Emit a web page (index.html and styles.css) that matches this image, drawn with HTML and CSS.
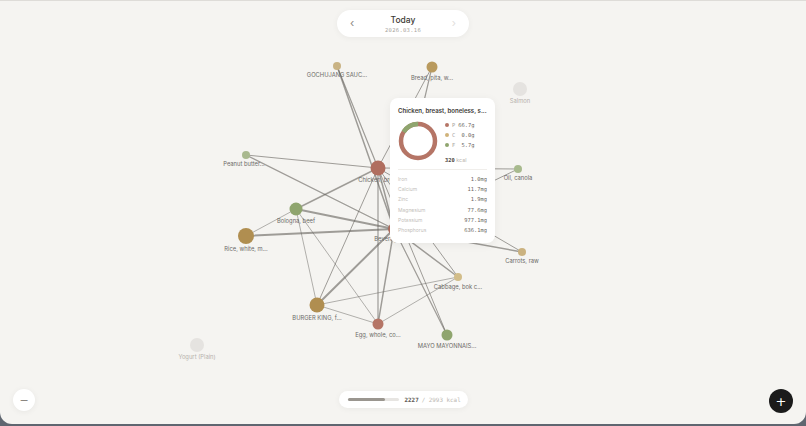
FILE: index.html
```html
<!DOCTYPE html>
<html lang="en">
  <head>
    <meta charset="UTF-8" />
    <meta name="viewport" content="width=device-width, initial-scale=1.0" />
    <title>Food Graph</title>
    <link rel="stylesheet" href="styles.css">
  </head>
  <body>
    <div class="app">
      <!-- Graph canvas: nodes sit at their own coordinates -->
      <svg class="graph" width="806" height="424" viewBox="0 0 806 424">
        <g class="edges">
          <line x1="337" y1="66" x2="378" y2="168" stroke-width="1.2" />
          <line x1="337" y1="66" x2="394" y2="229" stroke-width="1.5" />
          <line x1="432" y1="67" x2="378" y2="168" stroke-width="1" />
          <line x1="432" y1="67" x2="394" y2="229" stroke-width="1.2" />
          <line x1="246" y1="155" x2="378" y2="168" stroke-width="1" />
          <line x1="246" y1="155" x2="394" y2="229" stroke-width="1.3" />
          <line x1="296" y1="209" x2="378" y2="168" stroke-width="1.5" />
          <line x1="296" y1="209" x2="394" y2="229" stroke-width="1.8" />
          <line x1="296" y1="209" x2="317" y2="305" stroke-width="0.8" />
          <line x1="296" y1="209" x2="378" y2="324" stroke-width="0.8" />
          <line x1="296" y1="209" x2="246" y2="236" stroke-width="0.8" />
          <line x1="246" y1="236" x2="394" y2="229" stroke-width="2" />
          <line x1="378" y1="168" x2="394" y2="229" stroke-width="1.5" />
          <line x1="378" y1="168" x2="518" y2="169" stroke-width="1" />
          <line x1="394" y1="229" x2="518" y2="169" stroke-width="1" />
          <line x1="378" y1="168" x2="522" y2="252" stroke-width="1" />
          <line x1="394" y1="229" x2="522" y2="252" stroke-width="1.5" />
          <line x1="378" y1="168" x2="458" y2="277" stroke-width="1" />
          <line x1="394" y1="229" x2="458" y2="277" stroke-width="1.5" />
          <line x1="317" y1="305" x2="378" y2="168" stroke-width="1" />
          <line x1="317" y1="305" x2="394" y2="229" stroke-width="2" />
          <line x1="317" y1="305" x2="458" y2="277" stroke-width="0.8" />
          <line x1="317" y1="305" x2="378" y2="324" stroke-width="0.8" />
          <line x1="378" y1="324" x2="378" y2="168" stroke-width="1.2" />
          <line x1="378" y1="324" x2="394" y2="229" stroke-width="1.5" />
          <line x1="378" y1="324" x2="458" y2="277" stroke-width="0.8" />
          <line x1="447" y1="335" x2="378" y2="168" stroke-width="1" />
          <line x1="447" y1="335" x2="394" y2="229" stroke-width="1.2" />
        </g>
        <g class="nodes">
          <circle cx="337" cy="66" r="4" fill="#c9b384" />
          <circle cx="432" cy="67" r="5.5" fill="#b99a5e" />
          <circle cx="520" cy="89" r="7" class="faded" />
          <circle cx="246" cy="155" r="4" fill="#a9b98f" />
          <circle cx="378" cy="168" r="7.5" fill="#b06e5f" />
          <circle cx="518" cy="169" r="4" fill="#a8ba8e" />
          <circle cx="296" cy="209" r="6.5" fill="#8fa56e" />
          <circle cx="246" cy="236" r="8" fill="#b08e50" />
          <circle cx="394" cy="229" r="6" fill="#b06e5f" />
          <circle cx="522" cy="252" r="4" fill="#cbb27f" />
          <circle cx="458" cy="277" r="4" fill="#d2bd89" />
          <circle cx="317" cy="305" r="7.5" fill="#b08e50" />
          <circle cx="378" cy="324" r="5.5" fill="#b57566" />
          <circle cx="447" cy="335" r="5.5" fill="#8fa56e" />
          <circle cx="197" cy="345" r="7" class="faded" />
        </g>
        <g class="labels">
          <text x="337" y="76.5">GOCHUJANG SAUC...</text>
          <text x="432" y="79.5">Bread, pita, w...</text>
          <text x="520" y="102.5" class="muted">Salmon</text>
          <text x="244" y="165.5">Peanut butter...</text>
          <text x="378" y="181.5">Chicken, bre...</text>
          <text x="518" y="179.5">Oil, canola</text>
          <text x="296" y="222.5">Bologna, beef</text>
          <text x="246" y="250.5">Rice, white, m...</text>
          <text x="393" y="240.5">Beverages, ...</text>
          <text x="522" y="262.5">Carrots, raw</text>
          <text x="458" y="288.5">Cabbage, bok c...</text>
          <text x="317" y="319.5">BURGER KING, f...</text>
          <text x="378" y="336.5">Egg, whole, co...</text>
          <text x="447" y="347.5">MAYO MAYONNAIS...</text>
          <text x="197" y="358.5" class="muted">Yogurt (Plain)</text>
        </g>
      </svg>

      <header class="day-nav">
        <span class="arrow">&#8249;</span>
        <div class="day-title">
          <div class="day-name">Today</div>
          <div class="day-date">2026.03.16</div>
        </div>
        <span class="arrow arrow-off">&#8250;</span>
      </header>

      <!-- Hovered node details -->
      <div class="tooltip">
        <div class="tip-title">Chicken, breast, boneless, s...</div>
        <div class="tip-macros">
          <svg class="donut" width="40" height="40" viewBox="0 0 40 40">
            <circle cx="20" cy="20" r="17" fill="none" stroke="#b57566" stroke-width="4.5" />
            <circle cx="20" cy="20" r="17" fill="none" stroke="#8fa56e" stroke-width="4.5"
              stroke-dasharray="17.2 89.6" transform="rotate(-148 20 20)" />
          </svg>
          <div class="macro-side">
            <div class="macro"><i class="dot dot-p"></i><span class="m-key">P</span><span class="m-val">66.7g</span></div>
            <div class="macro"><i class="dot dot-c"></i><span class="m-key">C</span><span class="m-val">&nbsp;0.0g</span></div>
            <div class="macro"><i class="dot dot-f"></i><span class="m-key">F</span><span class="m-val">&nbsp;5.7g</span></div>
            <div class="kcal"><b>320</b> kcal</div>
          </div>
        </div>
        <div class="nutrients">
          <div class="row"><span>Iron</span><span class="val">1.0mg</span></div>
          <div class="row"><span>Calcium</span><span class="val">11.7mg</span></div>
          <div class="row"><span>Zinc</span><span class="val">1.9mg</span></div>
          <div class="row"><span>Magnesium</span><span class="val">77.6mg</span></div>
          <div class="row"><span>Potassium</span><span class="val">977.1mg</span></div>
          <div class="row"><span>Phosphorus</span><span class="val">636.1mg</span></div>
        </div>
      </div>

      <footer class="bottom">
        <button class="round zoom-out">&minus;</button>
        <div class="total">
          <div class="bar"><div class="bar-fill" style="width: 74%"></div></div>
          <span class="eaten">2227</span>
          <span class="goal">/ 2993 kcal</span>
        </div>
        <button class="round add">+</button>
      </footer>
    </div>
  </body>
</html>
```

FILE: styles.css
```css
/* Page frame */
body {
  margin: 0;
  background: #5f6670;
  font-family: Inter, "Noto Sans", sans-serif;
  overflow: hidden;
}

.app {
  position: relative;
  height: 424px;
  background: #f5f4f1;
  border-top: 1px solid #dedcd8;
  border-radius: 0 0 12px 12px;
  box-sizing: border-box;
  display: flex;
  flex-direction: column;
  justify-content: space-between;
  align-items: center;
  overflow: hidden;
}

/* Graph */
.graph {
  position: absolute;
  top: -1px;
  left: 0;
}

.edges line {
  stroke: rgba(100, 96, 92, 0.6);
  stroke-linecap: round;
}

.faded {
  fill: #e5e3e0;
}

.labels text {
  font-size: 5.8px;
  fill: #6c6a67;
  text-anchor: middle;
}

.labels text.muted {
  fill: #b5b2ad;
}

/* Day header */
.day-nav {
  position: relative;
  margin-top: 9px;
  width: 132px;
  height: 27px;
  background: #fff;
  border-radius: 14px;
  box-shadow: 0 1px 6px rgba(0, 0, 0, 0.05);
  display: flex;
  align-items: center;
  justify-content: space-between;
  padding: 0 13px;
  box-sizing: border-box;
}

.arrow {
  font-size: 11px;
  color: #8a8680;
  line-height: 1;
}

.arrow-off {
  color: #e2e0dc;
}

.day-title {
  text-align: center;
}

.day-name {
  font-size: 8.5px;
  color: #3d3a36;
  font-weight: 500;
}

.day-date {
  margin-top: 2px;
  font-family: "DejaVu Sans Mono", monospace;
  font-size: 5.5px;
  color: #aaa6a0;
  letter-spacing: 0.3px;
}

/* Tooltip card */
.tooltip {
  position: absolute;
  left: 390px;
  top: 97px;
  width: 105px;
  height: 145px;
  background: #fff;
  border-radius: 8px;
  box-shadow: 0 2px 10px rgba(0, 0, 0, 0.06);
  padding: 9px 8px 0 8px;
  box-sizing: border-box;
}

.tip-title {
  font-size: 6.1px;
  font-weight: 600;
  color: #3b3835;
  white-space: nowrap;
}

.tip-macros {
  display: flex;
  align-items: flex-start;
  gap: 7px;
  margin-top: 2px;
  height: 53px;
  border-bottom: 1px solid #f0eeeb;
}

.donut {
  margin-top: 5px;
  flex: none;
}

.macro-side {
  padding-top: 4px;
}

.macro {
  display: flex;
  align-items: center;
  height: 10px;
  font-family: "DejaVu Sans Mono", monospace;
  font-size: 5.4px;
}

.dot {
  width: 4px;
  height: 4px;
  border-radius: 50%;
  margin-right: 3px;
}

.dot-p { background: #b57566; }
.dot-c { background: #d0b37a; }
.dot-f { background: #8fa56e; }

.m-key {
  color: #a6a29c;
  margin-right: 3px;
}

.m-val {
  color: #6b6762;
}

.kcal {
  margin-top: 7px;
  font-size: 5.4px;
  color: #bab6b0;
}

.kcal b {
  font-family: "DejaVu Sans Mono", monospace;
  color: #4a4642;
}

.nutrients {
  padding-top: 4px;
}

.row {
  display: flex;
  justify-content: space-between;
  height: 10.2px;
  align-items: center;
  font-size: 5px;
  color: #c3c0bb;
}

.row .val {
  font-family: "DejaVu Sans Mono", monospace;
  font-size: 5.4px;
  color: #6b6762;
}

/* Bottom controls */
.bottom {
  position: relative;
  width: 100%;
  display: grid;
  grid-template-columns: 1fr auto 1fr;
  align-items: center;
  padding: 0 13px 11px 13px;
  box-sizing: border-box;
}

.round {
  border: none;
  border-radius: 50%;
  padding: 0;
  font-family: "DejaVu Sans", sans-serif;
  display: flex;
  align-items: center;
  justify-content: center;
}

.zoom-out {
  width: 22px;
  height: 22px;
  background: #fff;
  color: #8a8680;
  font-size: 11px;
  box-shadow: 0 1px 6px rgba(0, 0, 0, 0.06);
  margin-bottom: 2px;
}

.add {
  justify-self: end;
  width: 24px;
  height: 24px;
  background: #1b1b1b;
  color: #fff;
  font-size: 13px;
}

.total {
  width: 129px;
  height: 17px;
  background: #fff;
  border-radius: 9px;
  box-shadow: 0 1px 6px rgba(0, 0, 0, 0.05);
  display: flex;
  align-items: center;
  padding: 0 8px 0 9px;
  box-sizing: border-box;
  margin-bottom: 3px;
  font-family: "DejaVu Sans Mono", monospace;
  font-size: 5.9px;
  white-space: nowrap;
}

.bar {
  width: 51px;
  height: 2.5px;
  flex: none;
  background: #e7e5e2;
  border-radius: 2px;
  margin-right: 6px;
}

.bar-fill {
  height: 100%;
  background: #9a968f;
  border-radius: 2px;
}

.eaten {
  font-weight: bold;
  color: #5f5b56;
  margin-right: 3px;
}

.goal {
  color: #bcb8b2;
}
```
